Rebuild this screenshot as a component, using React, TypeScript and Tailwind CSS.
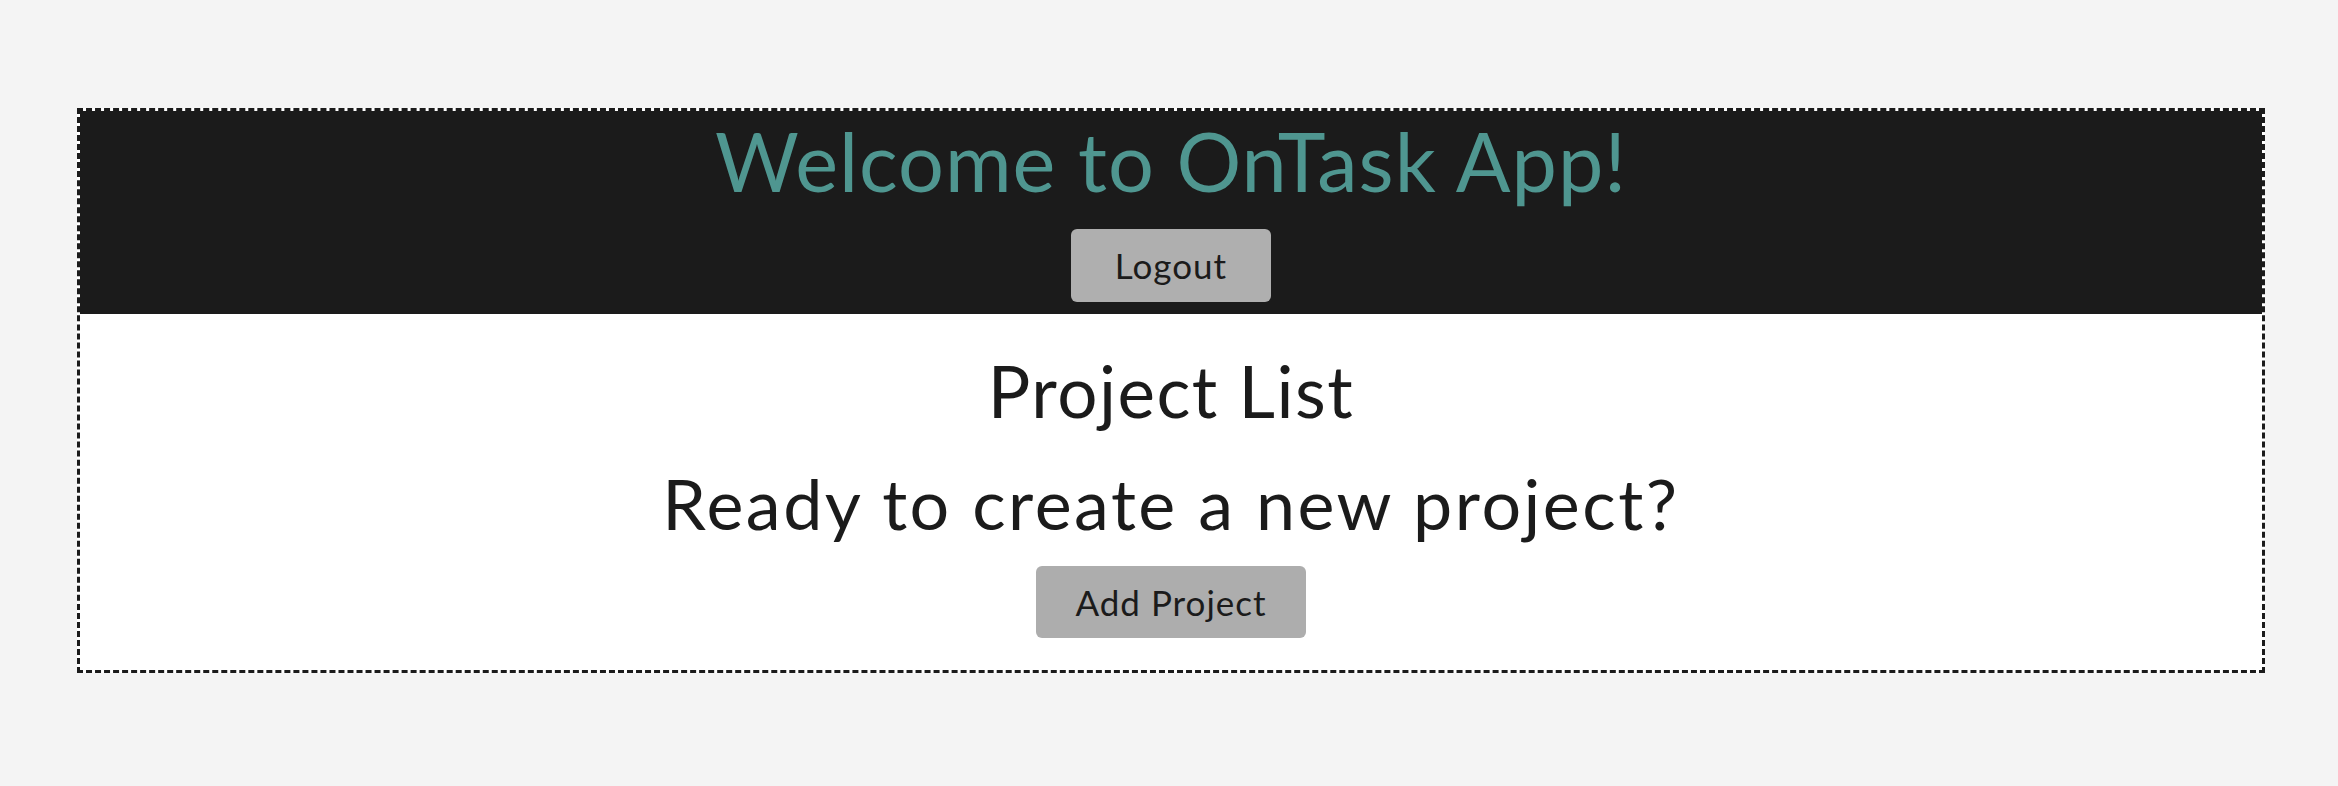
export default function App() {
  return (
    <div className="min-h-screen bg-[#f4f4f4] pt-[108px] font-['Lato',sans-serif] text-[#1b1b1b]">
      <div className="ml-[77px] w-[2188px] border-[3px] border-dashed border-[#1b1b1b] bg-white">
        {/* Header */}
        <header className="flex flex-col items-center bg-[#1b1b1b] pt-[9px] pb-[12px]">
          <h1 className="text-[81px] leading-none tracking-[1px] text-[#4f9690]">Welcome to OnTask App!</h1>
          <button className="mt-[28px] flex h-[73px] w-[200px] items-center justify-center rounded-[6px] bg-[#afafaf] text-[35px] leading-none tracking-[1px] text-[#1b1b1b]">
            Logout
          </button>
        </header>

        {/* Projects */}
        <main className="flex flex-col items-center pt-[41px] pb-[32px]">
          <h2 className="text-[71px] leading-none tracking-[1.5px]">Project List</h2>
          <h3 className="mt-[42px] text-[70px] leading-none tracking-[2.5px]">Ready to create a new project?</h3>
          <button className="mt-[28px] flex h-[72px] w-[270px] items-center justify-center rounded-[6px] bg-[#adadad] text-[35px] leading-none tracking-[1px] text-[#1b1b1b]">
            Add Project
          </button>
        </main>
      </div>
    </div>
  )
}
